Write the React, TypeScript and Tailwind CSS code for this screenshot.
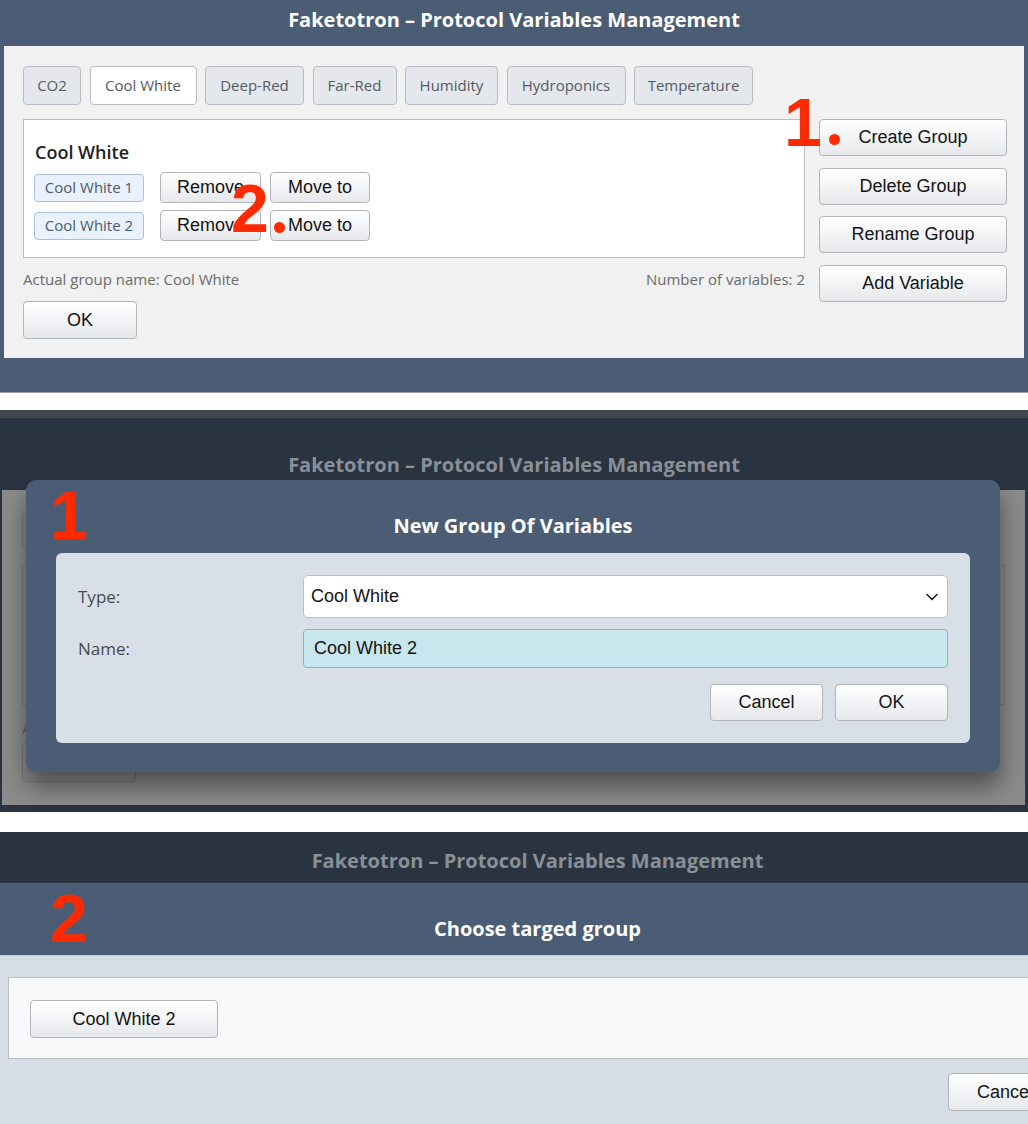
import { ChevronDown } from "lucide-react";

const title = "Faketotron – Protocol Variables Management";

function Btn({ children, className = "" }: { children: React.ReactNode; className?: string }) {
  return (
    <button
      className={`flex items-center justify-center rounded-[4px] border border-[#b1b5ba] bg-linear-to-b from-white to-[#e6e8eb] font-['Liberation_Sans',Arial,sans-serif] text-[18px] text-[#141414] ${className}`}
    >
      {children}
    </button>
  );
}

function Mark({ children, className = "" }: { children: React.ReactNode; className?: string }) {
  return (
    <span
      className={`absolute font-['Liberation_Sans',Arial,sans-serif] text-[68px] font-bold leading-none text-[#ff2a00] ${className}`}
    >
      {children}
    </span>
  );
}

function Dot({ className = "" }: { className?: string }) {
  return <span className={`absolute h-[11px] w-[11px] rounded-full bg-[#ff2a00] ${className}`} />;
}

const tabs = [
  { label: "CO2", w: "w-[58px]" },
  { label: "Cool White", w: "w-[107px]", active: true },
  { label: "Deep-Red", w: "w-[99px]" },
  { label: "Far-Red", w: "w-[84px]" },
  { label: "Humidity", w: "w-[93px]" },
  { label: "Hydroponics", w: "w-[119px]" },
  { label: "Temperature", w: "w-[119px]" },
];

function VarRow({ name }: { name: string }) {
  return (
    <div className="flex h-[31px] items-center">
      <span className="flex h-[28px] w-[110px] items-center justify-center rounded-[4px] border border-[#a9c1de] bg-[#e9f1fc] text-[15px] text-[#4d5b6a]">
        {name}
      </span>
      <Btn className="ml-[16px] h-[31px] w-[101px]">Remove</Btn>
      <Btn className="ml-[9px] h-[31px] w-[100px]">Move to</Btn>
    </div>
  );
}

function MainWindow() {
  return (
    <section className="relative flex h-[393px] flex-col border-b border-[#9aa0a6] bg-[#4b5d75]">
      <header className="flex h-[46px] items-center justify-center pb-[6px] text-[20px] font-bold text-white">
        {title}
      </header>
      <div className="mx-[4px] h-[312px] bg-[#f1f1f1] pl-[19px] pt-[20px]">
        <div className="flex gap-[8.5px]">
          {tabs.map((t) => (
            <span
              key={t.label}
              className={`flex h-[39px] items-center justify-center rounded-[4px] border border-[#b9bdc3] text-[15px] text-[#555b61] ${t.w} ${
                t.active ? "bg-white" : "bg-[#e4e7eb]"
              }`}
            >
              {t.label}
            </span>
          ))}
        </div>
        <div className="mt-[14px] flex">
          <div className="w-[782px]">
            <div className="h-[139px] border border-[#bdbdbd] bg-white pl-[10px] pt-[20px]">
              <div className="pl-[1px] text-[18px] font-semibold leading-[24px] text-[#222]">Cool White</div>
              <div className="mt-[8px] flex flex-col gap-[7px]">
                <VarRow name="Cool White 1" />
                <VarRow name="Cool White 2" />
              </div>
            </div>
            <div className="mt-[11px] flex justify-between text-[15px] leading-[20px] text-[#6b6b6b]">
              <span>Actual group name: Cool White</span>
              <span>Number of variables: 2</span>
            </div>
            <Btn className="mt-[12px] h-[38px] w-[114px]">OK</Btn>
          </div>
          <div className="ml-[14px] flex w-[188px] flex-col gap-[11.5px]">
            <Btn className="h-[37px]">Create Group</Btn>
            <Btn className="h-[37px]">Delete Group</Btn>
            <Btn className="h-[37px]">Rename Group</Btn>
            <Btn className="h-[37px]">Add Variable</Btn>
          </div>
        </div>
      </div>
      <Mark className="left-[784px] top-[88px]">1</Mark>
      <Dot className="left-[829px] top-[134px]" />
      <Mark className="left-[231px] top-[174px]">2</Mark>
      <Dot className="left-[274px] top-[222px]" />
    </section>
  );
}

function NewGroupDialog() {
  return (
    <section className="relative h-[402px] bg-[#2a3440]">
      <div className="h-[8px] bg-[#43484e]" />
      <div className="flex h-[72px] justify-center pt-[33px] text-[20px] font-bold leading-[28px] text-[#8a9097]">
        {title}
      </div>
      <div className="mx-[2px] mr-[3px] h-[315px] bg-[#8b8b8b] pl-[20px] pt-[23px]">
        <div className="h-[35px] w-[100px] rounded-[4px] border border-[#787878]" />
        <div className="mt-[17px] h-[140px] w-[983px] border border-[#7a7a7a]" />
        <div className="mt-[12px] text-[15px] text-[#5c5c5c]">Actual group name: Cool White</div>
        <div className="mt-[2px] h-[40px] w-[114px] rounded-[4px] border border-[#767676]" />
      </div>

      <div className="absolute left-[26px] top-[70px] h-[292px] w-[974px] rounded-[10px] bg-[#4b5d75] px-[30px] shadow-[0_14px_24px_rgba(0,0,0,0.45)]">
        <div className="flex h-[73px] items-center justify-center pt-[18px] text-[20px] font-bold text-white">
          New Group Of Variables
        </div>
        <div className="h-[190px] rounded-[6px] bg-[#d8dfe6] px-[22px] pt-[22px]">
          <div className="flex items-center">
            <span className="w-[225px] text-[17px] text-[#474b50]">Type:</span>
            <div className="flex h-[43px] flex-1 items-center justify-between rounded-[5px] border border-[#b7bec6] bg-white pl-[7px] pr-[5px] font-['Liberation_Sans',Arial,sans-serif] text-[18px] text-[#141414]">
              <span>Cool White</span>
              <ChevronDown size={20} strokeWidth={2} className="text-[#222]" />
            </div>
          </div>
          <div className="mt-[11px] flex items-center">
            <span className="w-[225px] text-[17px] text-[#474b50]">Name:</span>
            <div className="flex h-[39px] flex-1 items-center rounded-[4px] border border-[#97acb8] bg-[#c8e6ee] pl-[10px] font-['Liberation_Sans',Arial,sans-serif] text-[18px] text-[#141414]">
              Cool White 2
            </div>
          </div>
          <div className="mt-[16px] flex justify-end gap-[12px]">
            <Btn className="h-[37px] w-[113px]">Cancel</Btn>
            <Btn className="h-[37px] w-[113px]">OK</Btn>
          </div>
        </div>
        <Mark className="left-[24px] top-[1px]">1</Mark>
      </div>
    </section>
  );
}

function TargetDialog() {
  return (
    <section className="relative h-[292px] overflow-hidden bg-[#d6dde4]">
      <div className="flex h-[51px] justify-center bg-[#2a3440] pl-[47px] pt-[15px] text-[20px] font-bold leading-[28px] text-[#8a9097]">
        {title}
      </div>
      <div className="relative flex h-[73px] justify-center border-b border-[#c2c9d0] bg-[#4b5d75] pl-[47px] pt-[32px] text-[20px] font-bold leading-[28px] text-white">
        Choose targed group
        <Mark className="left-[50px] top-[1px]">2</Mark>
      </div>
      <div className="ml-[8px] mt-[21px] h-[82px] w-[1040px] border border-[#b8bfc6] bg-[#f7f9fa] pl-[21px] pt-[22px]">
        <Btn className="h-[38px] w-[188px]">Cool White 2</Btn>
      </div>
      <Btn className="ml-[948px] mt-[14px] h-[38px] w-[114px] shrink-0">Cancel</Btn>
    </section>
  );
}

export default function App() {
  return (
    <div className="w-[1028px] bg-white font-['Open_Sans',sans-serif]">
      <MainWindow />
      <div className="h-[17px] bg-white" />
      <NewGroupDialog />
      <div className="h-[20px] bg-white" />
      <TargetDialog />
    </div>
  );
}
